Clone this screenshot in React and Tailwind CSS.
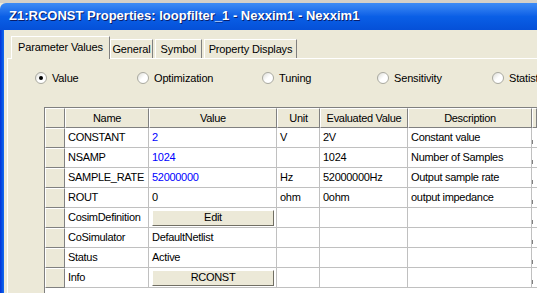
import React from 'react';

const rows = [
  { name: 'CONSTANT', value: '2', blue: true, unit: 'V', evaluated: '2V', desc: 'Constant value' },
  { name: 'NSAMP', value: '1024', blue: true, unit: '', evaluated: '1024', desc: 'Number of Samples' },
  { name: 'SAMPLE_RATE', value: '52000000', blue: true, unit: 'Hz', evaluated: '52000000Hz', desc: 'Output sample rate' },
  { name: 'ROUT', value: '0', unit: 'ohm', evaluated: '0ohm', desc: 'output impedance' },
  { name: 'CosimDefinition', button: 'Edit', unit: '', evaluated: '', desc: '' },
  { name: 'CoSimulator', value: 'DefaultNetlist', unit: '', evaluated: '', desc: '' },
  { name: 'Status', value: 'Active', unit: '', evaluated: '', desc: '' },
  { name: 'Info', button: 'RCONST', unit: '', evaluated: '', desc: '' },
];

const radios = [
  { label: 'Value', x: 'w-[102px]', checked: true },
  { label: 'Optimization', x: 'w-[125px]' },
  { label: 'Tuning', x: 'w-[115px]' },
  { label: 'Sensitivity', x: 'w-[115px]' },
  { label: 'Statistics', x: 'w-[60px]' },
];

function Radio({ checked }) {
  return (
    <span className="w-[12px] h-[12px] rounded-full border border-[#a9a9a0] bg-gradient-to-br from-[#dcdcd5] via-white to-white flex items-center justify-center shrink-0">
      {checked ? <span className="w-[4px] h-[4px] rounded-full bg-black" /> : null}
    </span>
  );
}

function HeaderCell({ children }) {
  return (
    <div className="h-5 bg-[#ece9d8] border-t border-l border-t-white border-l-white border-r border-b border-r-[#808080] border-b-[#808080] flex items-center justify-center overflow-hidden whitespace-nowrap">
      {children}
    </div>
  );
}

function RowHead() {
  return <div className="h-5 bg-[#ece9d8] border-t border-l border-t-white border-l-white border-r border-b border-r-[#808080] border-b-[#808080]" />;
}

function Cell({ children, blue }) {
  return (
    <div className={"h-5 border-r border-b border-[#c0c0c0] flex items-center pl-[3px] overflow-hidden whitespace-nowrap " + (blue ? 'text-[#0000ff]' : 'text-black')}>
      {children}
    </div>
  );
}

function App() {
  return (
    <div className="w-[537px] h-[293px] overflow-hidden bg-[#ece9d8] text-[11px] text-black flex flex-col" style={{ fontFamily: '"Liberation Sans", Arial, sans-serif' }}>
      <div className="h-[3px] bg-[#d4d0c8] shrink-0" />
      <div className="h-[27px] shrink-0 rounded-tl-[6px] bg-gradient-to-b from-[#3d8bf5] via-[#0a5fe6] to-[#0550d8] flex items-center pl-[9px] pb-[1px]">
        <span className="text-white font-bold text-[13px] tracking-[0px] [text-shadow:1px_1px_0_#0a1e6a]">Z1:RCONST Properties: loopfilter_1 - Nexxim1 - Nexxim1</span>
      </div>
      <div className="flex flex-1 min-h-0">
        <div className="w-[4px] bg-gradient-to-r from-[#0831d9] to-[#166aee] shrink-0" />
        <div className="flex-1 flex flex-col pt-[6px] min-w-0 tracking-[-0.15px]">
          {/* tabs */}
          <div className="flex items-end h-[22px] pl-[7px] shrink-0">
            <div className="h-[23px] w-[99px] bg-[#ece9d8] border-t border-t-white border-l border-l-white border-r border-r-[#808080] flex items-center justify-center relative -mb-px z-10 pb-[2px]">
              Parameter Values
            </div>
            <div className="h-[19px] w-[43px] bg-[#ece9d8] border-t border-l border-white border-r border-r-[#808080] flex items-center justify-center">General</div>
            <div className="h-[19px] w-[47px] ml-[2px] bg-[#ece9d8] border-t border-l border-white border-r border-r-[#808080] flex items-center justify-center">Symbol</div>
            <div className="h-[19px] w-[93px] ml-[2px] bg-[#ece9d8] border-t border-l border-white border-r border-r-[#808080] flex items-center justify-center">Property Displays</div>
          </div>
          {/* panel */}
          <div className="flex-1 ml-[3px] border-t border-l border-white flex flex-col min-h-0">
            <div className="h-[36px] flex items-center pl-[27px] pt-[2px] shrink-0">
              {radios.map((r) => (
                <div key={r.label} className={"flex items-center gap-[5px] shrink-0 " + r.x}>
                  <Radio checked={r.checked} />
                  <span>{r.label}</span>
                </div>
              ))}
            </div>
            <div className="h-[12px] shrink-0" />
            <div className="flex-1 ml-[36px] bg-white border-l border-t border-[#808080] min-h-0 tracking-[-0.3px]">
              <div className="grid grid-cols-[20px_84px_128px_43px_88px_124px_1fr]">
                <RowHead />
                <HeaderCell>Name</HeaderCell>
                <HeaderCell>Value</HeaderCell>
                <HeaderCell>Unit</HeaderCell>
                <HeaderCell>Evaluated Value</HeaderCell>
                <HeaderCell>Description</HeaderCell>
                <HeaderCell />
                {rows.map((r) => (
                  <React.Fragment key={r.name}>
                    <RowHead />
                    <Cell>{r.name}</Cell>
                    {r.button ? (
                      <div className="h-5 border-r border-b border-[#c0c0c0] flex items-center pl-[3px] pr-[2px]">
                        <div className="w-full h-[16px] bg-[#ece9d8] border-t border-l border-t-white border-l-white border-r border-b border-r-[#716f64] border-b-[#716f64] flex items-center justify-center">
                          {r.button}
                        </div>
                      </div>
                    ) : (
                      <Cell blue={r.blue}>{r.value}</Cell>
                    )}
                    <Cell>{r.unit}</Cell>
                    <Cell>{r.evaluated}</Cell>
                    <Cell>{r.desc}</Cell>
                    <div className="h-5 border-b border-[#c0c0c0] flex items-end">
                      <span className="w-[1px] h-[4px] bg-[#808080] mb-[3px]" />
                    </div>
                  </React.Fragment>
                ))}
              </div>
            </div>
          </div>
        </div>
      </div>
    </div>
  );
}

export default App;
